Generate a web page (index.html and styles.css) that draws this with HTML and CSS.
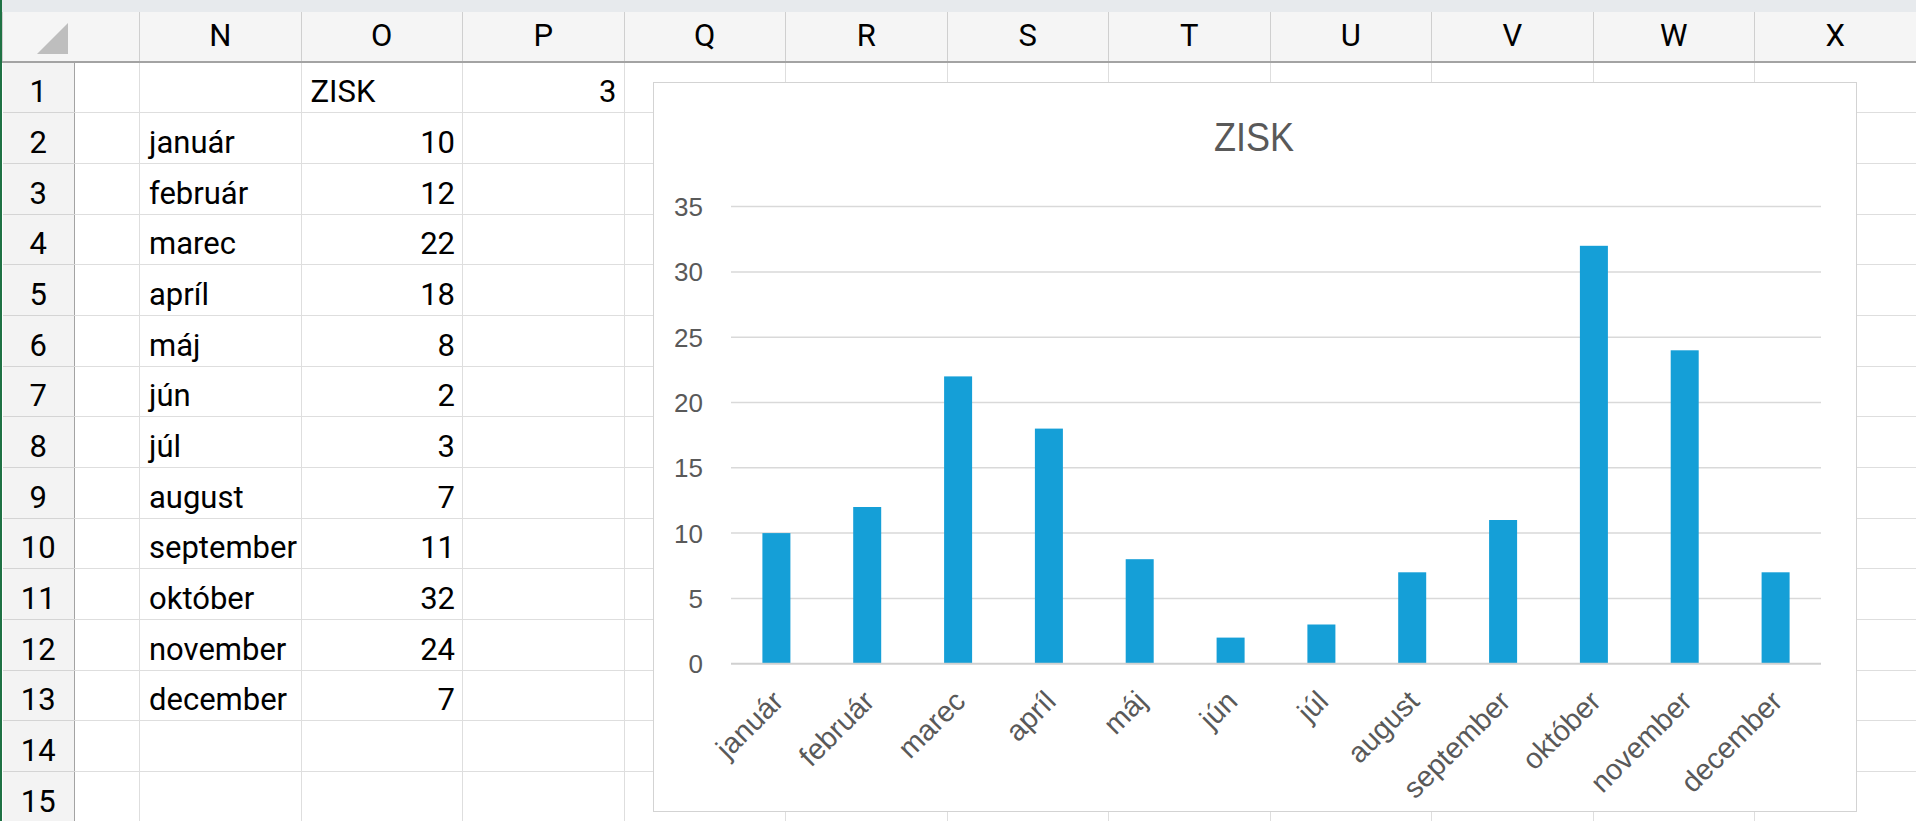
FILE: index.html
```html
<!DOCTYPE html>
<html lang="sk">

<head>
      <meta charset="UTF-8">
      <meta name="viewport" content="width=device-width, initial-scale=1.0">
      <title>Zisk - hárok</title>

      <!-- style -->
      <link rel="stylesheet" href="styles.css">
</head>

<body>
      <div class="page">
            <div class="topbar"></div>

            <table class="sheet">
                  <colgroup>
                        <col class="c-row">
                        <col class="c-m">
                        <col class="c-std"><col class="c-std"><col class="c-std"><col class="c-std">
                        <col class="c-std"><col class="c-std"><col class="c-std"><col class="c-std">
                        <col class="c-std"><col class="c-std"><col class="c-std">
                  </colgroup>
                  <tr class="cols">
                        <th colspan="2" class="corner"><span class="tri"></span></th>
                        <th>N</th><th>O</th><th>P</th><th>Q</th><th>R</th><th>S</th>
                        <th>T</th><th>U</th><th>V</th><th>W</th><th>X</th>
                  </tr>
                  <tr><th class="rn">1</th><td></td><td></td><td>ZISK</td><td class="num">3</td><td></td><td></td><td></td><td></td><td></td><td></td><td></td><td></td></tr>
                  <tr><th class="rn">2</th><td></td><td>január</td><td class="num">10</td><td></td><td></td><td></td><td></td><td></td><td></td><td></td><td></td><td></td></tr>
                  <tr><th class="rn">3</th><td></td><td>február</td><td class="num">12</td><td></td><td></td><td></td><td></td><td></td><td></td><td></td><td></td><td></td></tr>
                  <tr><th class="rn">4</th><td></td><td>marec</td><td class="num">22</td><td></td><td></td><td></td><td></td><td></td><td></td><td></td><td></td><td></td></tr>
                  <tr><th class="rn">5</th><td></td><td>apríl</td><td class="num">18</td><td></td><td></td><td></td><td></td><td></td><td></td><td></td><td></td><td></td></tr>
                  <tr><th class="rn">6</th><td></td><td>máj</td><td class="num">8</td><td></td><td></td><td></td><td></td><td></td><td></td><td></td><td></td><td></td></tr>
                  <tr><th class="rn">7</th><td></td><td>jún</td><td class="num">2</td><td></td><td></td><td></td><td></td><td></td><td></td><td></td><td></td><td></td></tr>
                  <tr><th class="rn">8</th><td></td><td>júl</td><td class="num">3</td><td></td><td></td><td></td><td></td><td></td><td></td><td></td><td></td><td></td></tr>
                  <tr><th class="rn">9</th><td></td><td>august</td><td class="num">7</td><td></td><td></td><td></td><td></td><td></td><td></td><td></td><td></td><td></td></tr>
                  <tr><th class="rn">10</th><td></td><td>september</td><td class="num">11</td><td></td><td></td><td></td><td></td><td></td><td></td><td></td><td></td><td></td></tr>
                  <tr><th class="rn">11</th><td></td><td>október</td><td class="num">32</td><td></td><td></td><td></td><td></td><td></td><td></td><td></td><td></td><td></td></tr>
                  <tr><th class="rn">12</th><td></td><td>november</td><td class="num">24</td><td></td><td></td><td></td><td></td><td></td><td></td><td></td><td></td><td></td></tr>
                  <tr><th class="rn">13</th><td></td><td>december</td><td class="num">7</td><td></td><td></td><td></td><td></td><td></td><td></td><td></td><td></td><td></td></tr>
                  <tr><th class="rn">14</th><td></td><td></td><td></td><td></td><td></td><td></td><td></td><td></td><td></td><td></td><td></td><td></td></tr>
                  <tr><th class="rn">15</th><td></td><td></td><td></td><td></td><td></td><td></td><td></td><td></td><td></td><td></td><td></td><td></td></tr>
            </table>

            <!-- chart floating over the cells -->
            <div class="chart">
                  <svg class="chart-svg" width="1201" height="727" viewBox="0 0 1201 727">
                        <text class="chart-title" x="600" y="68" textLength="80" lengthAdjust="spacingAndGlyphs">ZISK</text>

                        <!-- grid -->
                        <g class="grid">
                              <line x1="77" x2="1167" y1="123.6" y2="123.6" />
                              <line x1="77" x2="1167" y1="188.9" y2="188.9" />
                              <line x1="77" x2="1167" y1="254.2" y2="254.2" />
                              <line x1="77" x2="1167" y1="319.5" y2="319.5" />
                              <line x1="77" x2="1167" y1="384.8" y2="384.8" />
                              <line x1="77" x2="1167" y1="450.1" y2="450.1" />
                              <line x1="77" x2="1167" y1="515.4" y2="515.4" />
                        </g>

                        <g class="y-labels">
                              <text x="49" y="133">35</text>
                              <text x="49" y="198.3">30</text>
                              <text x="49" y="263.6">25</text>
                              <text x="49" y="328.9">20</text>
                              <text x="49" y="394.2">15</text>
                              <text x="49" y="459.5">10</text>
                              <text x="49" y="524.8">5</text>
                              <text x="49" y="590.1">0</text>
                        </g>

                        <!-- bars -->
                        <g class="bars">
                              <rect x="108.4" y="450.1" width="28" height="130.6" />
                              <rect x="199.2" y="424.0" width="28" height="156.7" />
                              <rect x="290.1" y="293.4" width="28" height="287.3" />
                              <rect x="380.9" y="345.6" width="28" height="235.1" />
                              <rect x="471.7" y="476.2" width="28" height="104.5" />
                              <rect x="562.6" y="554.6" width="28" height="26.1" />
                              <rect x="653.4" y="541.5" width="28" height="39.2" />
                              <rect x="744.2" y="489.3" width="28" height="91.4" />
                              <rect x="835.1" y="437.0" width="28" height="143.7" />
                              <rect x="925.9" y="162.8" width="28" height="417.9" />
                              <rect x="1016.7" y="267.3" width="28" height="313.4" />
                              <rect x="1107.6" y="489.3" width="28" height="91.4" />
                        </g>

                        <line class="axis" x1="77" x2="1167" y1="580.7" y2="580.7" />

                        <g class="x-labels">
                              <text transform="translate(124 613) rotate(-45)">január</text>
                              <text transform="translate(215 613) rotate(-45)">február</text>
                              <text transform="translate(306 613) rotate(-45)">marec</text>
                              <text transform="translate(396.5 613) rotate(-45)">apríl</text>
                              <text transform="translate(487.5 613) rotate(-45)">máj</text>
                              <text transform="translate(578 613) rotate(-45)">jún</text>
                              <text transform="translate(669 613) rotate(-45)">júl</text>
                              <text transform="translate(760 613) rotate(-45)">august</text>
                              <text transform="translate(851 613) rotate(-45)">september</text>
                              <text transform="translate(941.5 613) rotate(-45)">október</text>
                              <text transform="translate(1032.5 613) rotate(-45)">november</text>
                              <text transform="translate(1123 613) rotate(-45)">december</text>
                        </g>
                  </svg>
            </div>
      </div>
</body>

</html>
```

FILE: styles.css
```css
* {
      box-sizing: border-box;
}

body {
      margin: 0;
      overflow: hidden;
      background-color: #ffffff;
      font-family: Roboto, "Liberation Sans", sans-serif;
      color: #000000;
}

.page {
      position: relative;
      height: 821px;
      overflow: hidden;
      border-left: 2px solid #1f7244;
}

.topbar {
      height: 12px;
      background-color: #e7eaed;
}

/* ---- sheet grid ---- */

.sheet {
      border-collapse: collapse;
      table-layout: fixed;
      width: 1913.5px;
}

.c-row {
      width: 72px;
}

.c-m {
      width: 65px;
}

.c-std {
      width: 161.5px;
}

.sheet tr {
      height: 50.7px;
}

.sheet tr.cols {
      height: 50px;
}

.sheet td {
      border: 1px solid #dedede;
      padding: 0 8px 5px 9px;
      vertical-align: bottom;
      font-size: 31px;
      line-height: 31px;
      white-space: nowrap;
      overflow: hidden;
}

.sheet td.num {
      text-align: right;
      padding-right: 7px;
}

.cols th {
      background-color: #f5f5f5;
      border-top: none;
      border-left: 1px solid #cfcfcf;
      border-right: 1px solid #cfcfcf;
      border-bottom: 2px solid #a3a3a3;
      font-weight: normal;
      font-size: 31px;
      line-height: 31px;
      vertical-align: middle;
      padding: 0 0 2px;
}

.cols th.corner {
      vertical-align: top;
      text-align: left;
      padding: 11px 0 0 34px;
}

.tri {
      display: block;
      width: 0;
      height: 0;
      border-left: 31px solid transparent;
      border-bottom: 31px solid #bebebe;
}

.rn {
      background-color: #f3f3f3;
      border-top: 1px solid #d4d4d4;
      border-bottom: 1px solid #d4d4d4;
      border-right: 1px solid #a3a3a3;
      font-weight: normal;
      font-size: 31px;
      line-height: 31px;
      text-align: center;
      vertical-align: bottom;
      padding: 0 0 5px;
}

/* ---- chart ---- */

.chart {
      position: absolute;
      left: 651px;
      top: 82px;
      width: 1204px;
      height: 730px;
      background-color: #ffffff;
      border: 1.5px solid #d3d3d3;
}

.chart-svg {
      display: block;
      font-family: "Liberation Sans", Arial, sans-serif;
}

.chart-title {
      font-size: 41px;
      fill: #595959;
      text-anchor: middle;
}

.grid line {
      stroke: #d9d9d9;
      stroke-width: 1.5;
}

.axis {
      stroke: #d0d0d0;
      stroke-width: 2;
}

.y-labels text {
      font-size: 26px;
      fill: #595959;
      text-anchor: end;
}

.bars rect {
      fill: #159fd7;
}

.x-labels text {
      font-size: 29px;
      fill: #595959;
      text-anchor: end;
      dominant-baseline: central;
}
```
